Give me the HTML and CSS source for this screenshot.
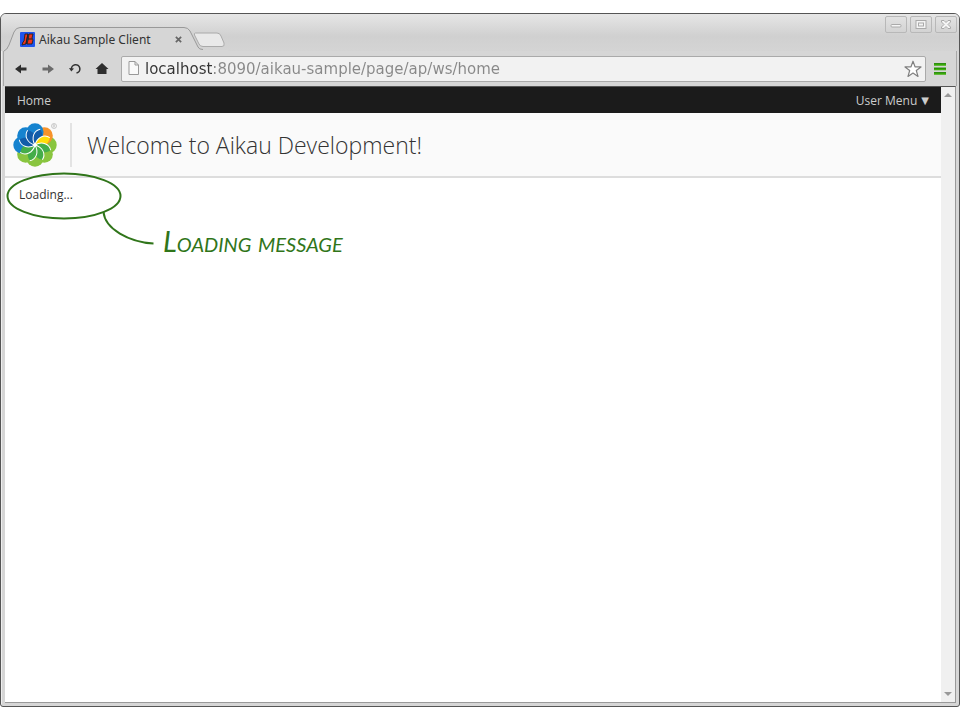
FILE: index.html
```
<!DOCTYPE html>
<html lang="en">
<head>
<meta charset="utf-8">
<title>Aikau Sample Client</title>
<link rel="stylesheet" href="styles.css">
</head>
<body>
<div class="window">
  <div class="titlebar">
    <div class="tabs">
      <svg class="tab-shape" viewBox="0 0 224 24" aria-hidden="true">
        <path class="tab-fill" d="M0 24 Q3 23 5 18 L10 5 Q12 1 16 1 H180 Q184 1 186 4 L194 20 Q195 23 199 23 H224 V24Z"/>
        <path class="tab-line" d="M0 24 Q3 23 5 18 L10 5 Q12 .5 16 .5 H180 Q184 .5 186 4 L194 20 Q195 22.500 199 22.500"/>
        <path class="new-tab" d="M191.500 6 H213 Q216 6 217 9 L220 16 Q221 19.500 218 19.500 H199 Q196 19.500 195 17 L190.500 8 Q190 6 191.500 6Z"/>
      </svg>
      <svg class="favicon" viewBox="0 0 15 15" aria-hidden="true">
        <rect width="15" height="15" rx="1" fill="#1f55ee"/>
        <path d="M5 2H8L6 12 2 13 3 10 4 9ZM9 2H13L12 6 13 8 12 12H7L8 8Z" fill="#f0341c" stroke="#222" stroke-width=".900"/>
        <path d="M8 7H12M8 2 6 12" stroke="#222" stroke-width="1.200"/>
      </svg>
      <span class="tab-title">Aikau Sample Client</span>
      <button class="tab-close" aria-label="Close tab"><svg viewBox="0 0 8 8"><path d="M1 1 7 7M7 1 1 7"/></svg></button>
    </div>
    <div class="controls">
      <button aria-label="Minimize"><svg viewBox="0 0 20 15"><rect x="5" y="7.500" width="10" height="2.500" rx="1"/></svg></button>
      <button aria-label="Maximize"><svg viewBox="0 0 20 15"><rect x="5" y="3.500" width="10" height="8"/><rect x="7.500" y="6" width="5" height="3"/></svg></button>
      <button aria-label="Close window"><svg viewBox="0 0 20 15"><path d="M5.500 3.500H8L10 5.500 12 3.500H14.500V5L12 7.500 14.500 10V11.500H12L10 9.500 8 11.500H5.500V10L8 7.500 5.500 5Z"/></svg></button>
    </div>
  </div>
  <div class="toolbar">
    <button class="tool" aria-label="Back"><svg viewBox="0 0 12 12"><path d="M0 6 6 1.500V4.500H11.500V7.500H6V10.500Z" fill="#2e2e2e"/></svg></button>
    <button class="tool" aria-label="Forward"><svg viewBox="0 0 12 12"><path d="M12 6 6 1.500V4.500H.500V7.500H6V10.500Z" fill="#6b6b6b"/></svg></button>
    <button class="tool" aria-label="Reload"><svg viewBox="0 0 12 12"><path d="M2.500 6.500A4.200 4.200 0 1 1 7.500 10" fill="none" stroke="#333" stroke-width="1.600"/><path d="M0 5 5 5.500 2.300 8.500Z" fill="#333"/></svg></button>
    <button class="tool" aria-label="Home page"><svg viewBox="0 0 12 12"><path d="M6 0 12.500 6H10.500V11H1.500V6H-.500Z" fill="#2e2e2e"/></svg></button>
    <div class="address">
      <svg class="page-icon" viewBox="0 0 12 15" aria-hidden="true"><path d="M1 .500H7L10.500 4V13.500H1ZM7 .500V4H10.500" fill="#fafafa" stroke="#999"/></svg>
      <input class="url" type="text" aria-label="Address" value="localhost:8090/aikau-sample/page/ap/ws/home" spellcheck="false">
      <button class="star" aria-label="Bookmark"><svg viewBox="0 0 18 18"><path d="M9 1.200 11 6.800 17 6.900 12.300 10.500 14 16.400 9 13 4 16.400 5.700 10.500 1 6.900 7 6.800Z" fill="#fff" stroke="#808080" stroke-width="1.200" stroke-linejoin="round"/></svg></button>
    </div>
    <button class="menu" aria-label="Browser menu"><svg viewBox="0 0 12 12"><path d="M0 1.500H12M0 6H12M0 10.500H12" stroke="#3fb00c" stroke-width="2.600"/><path d="M0 .700H12M0 5.200H12M0 9.700H12" stroke="#24830b"/></svg></button>
  </div>
  <div class="viewport">
    <div class="page">
      <nav class="navbar">
        <a href="#">Home</a>
        <button class="user-menu">User Menu <span class="caret">▼</span></button>
      </nav>
      <header class="header">
        <svg class="logo" viewBox="0 0 46 46" role="img" aria-label="Alfresco">
          <defs>
            <path id="petal" d="M23 23 C18 19 14.500 14.500 14.500 9.800 A8.500 8.500 0 0 1 31.500 9.800 C31.500 14.500 28 19 23 23Z"/>
            <path id="lens" d="M23 23 C16.500 18 16.500 10 22 6.500 C28.500 11 28 18 23 23Z"/>
            <path id="rib" d="M23 23 C16.500 18 16.500 10 22 6.500"/>
          </defs>
          <g>
            <use href="#petal" fill="#89c53f" transform="rotate(90 23 23)"/>
            <use href="#petal" fill="#89c53f" transform="rotate(135 23 23)"/>
            <use href="#petal" fill="#89c53f" transform="rotate(180 23 23)"/>
            <use href="#petal" fill="#89c53f" transform="rotate(225 23 23)"/>
            <use href="#petal" fill="#1683cf" transform="rotate(270 23 23)"/>
            <use href="#petal" fill="#1683cf" transform="rotate(315 23 23)"/>
            <use href="#petal" fill="#f7932a" transform="rotate(45 23 23)"/>
            <use href="#petal" fill="#1683cf"/>
          </g>
          <g>
            <use href="#lens" fill="#125ca9" transform="rotate(22 23 23)"/>
            <use href="#lens" fill="#ffdd08" transform="rotate(67 23 23)"/>
            <use href="#lens" fill="#45ad49" transform="rotate(112 23 23)"/>
            <use href="#lens" fill="#45ad49" transform="rotate(157 23 23)"/>
            <use href="#lens" fill="#45ad49" transform="rotate(202 23 23)"/>
            <use href="#lens" fill="#45ad49" transform="rotate(247 23 23)"/>
            <use href="#lens" fill="#125ca9" transform="rotate(292 23 23)"/>
            <use href="#lens" fill="#125ca9" transform="rotate(337 23 23)"/>
          </g>
          <g class="ribs">
            <use href="#rib" transform="rotate(22 23 23)"/>
            <use href="#rib" transform="rotate(67 23 23)"/>
            <use href="#rib" transform="rotate(112 23 23)"/>
            <use href="#rib" transform="rotate(157 23 23)"/>
            <use href="#rib" transform="rotate(202 23 23)"/>
            <use href="#rib" transform="rotate(247 23 23)"/>
            <use href="#rib" transform="rotate(292 23 23)"/>
            <use href="#rib" transform="rotate(337 23 23)"/>
          </g>
          <circle cx="23" cy="23" r="1.800" fill="#fff"/>
          <circle cx="42" cy="4" r="2.500" fill="none" stroke="#aaa" stroke-width=".600"/>
          <path d="M41.300 5.500V2.700H42.500Q43.300 3.500 42 4L43 5.500" fill="none" stroke="#aaa" stroke-width=".500"/>
        </svg>
        <h1>Welcome to Aikau Development!</h1>
      </header>
      <main class="content">
        <p>Loading...</p>
        <div class="callout">
          <svg viewBox="0 0 150 75" aria-hidden="true"><ellipse cx="59" cy="18" rx="56.500" ry="22.500"/><path d="M98.500 34C100 51 124 64 148.500 65.500"/></svg>
          <span>Loading message</span>
        </div>
      </main>
    </div>
    <div class="scrollbar" aria-hidden="true">
      <svg viewBox="0 0 8 4"><path d="M0 4 4 0 8 4Z"/></svg>
      <svg viewBox="0 0 8 4"><path d="M0 0 4 4 8 0Z"/></svg>
    </div>
  </div>
</div>
</body>
</html>
```
FILE: styles.css
```
* { box-sizing: border-box; }
body {
  margin: 0;
  padding: 13px 0;
  min-height: 100vh;
  display: flex;
  background: #fff;
  font-family: "Open Sans", sans-serif;
  color: #333;
}
button { padding: 0; border: 0; background: none; font: inherit; color: inherit; }
svg { display: block; overflow: visible; }
.window {
  flex: 1;
  display: flex;
  flex-direction: column;
  border: 1px solid #555;
  border-radius: 6px 6px 3px 3px;
  background: #d6d6d6;
  box-shadow: inset 1px 1px #eee;
}
.titlebar {
  display: flex;
  justify-content: space-between;
  height: 37px;
  border-radius: 5px 5px 0 0;
  background: linear-gradient(#e6e6e6, #d0d0d0 60%, #d4d4d4);
}
.tabs {
  position: relative;
  align-self: flex-end;
  display: flex;
  align-items: center;
  width: 224px;
  height: 24px;
  margin-left: 3px;
  padding-left: 16px;
  font-size: 12px;
}
.tab-shape { position: absolute; inset: 0; width: 224px; height: 24px; }
.tab-fill { fill: #d6d6d6; }
.tab-line { fill: none; stroke: #999; }
.new-tab { fill: #e9e9e9; stroke: #aaa; }
.favicon, .tab-title, .tab-close { position: relative; }
.favicon { width: 15px; height: 15px; }
.tab-title { width: 140px; padding-left: 4px; font-family: "Noto Sans", sans-serif; color: #333; }
.tab-close svg { width: 7px; height: 7px; fill: none; stroke: #666; stroke-width: 2; }
.controls { display: flex; gap: 3px; padding: 2px 2px 0 0; }
.controls button {
  height: 17px;
  border: 1px solid #b8b8b8;
  border-radius: 2px;
  background: linear-gradient(#e2e2e2, #d3d3d3);
}
.controls svg { width: 20px; height: 15px; fill: #f5f5f5; stroke: #aaa; }
.toolbar {
  display: flex;
  align-items: center;
  height: 35px;
  margin: 0 2px;
  padding-left: 11px;
  border: 1px solid #a8a8a8;
  border-width: 0 1px;
  background: #d6d6d6;
}
.tool { width: 12px; margin-right: 15px; }
.tool svg { width: 12px; height: 12px; }
.address {
  flex: 1;
  display: flex;
  align-items: center;
  min-width: 0;
  height: 26px;
  margin: 0 8px 0 -2px;
  padding: 0 3px 0 6px;
  border: 1px solid #aaa;
  border-radius: 2px;
  background: #f2f2f2;
}
.page-icon { width: 12px; height: 15px; }
.url {
  flex: 1;
  min-width: 0;
  height: 24px;
  margin-left: 5px;
  padding: 0;
  border: 0;
  outline: 0;
  font: 15px "DejaVu Sans", sans-serif;
  color: transparent;
  background: linear-gradient(to right, #333 67px, #888 67px) text;
  -webkit-background-clip: text;
}
.star svg { width: 18px; height: 18px; }
.menu { margin-right: 10px; }
.menu svg { width: 12px; height: 12px; }
.viewport {
  flex: 1;
  display: flex;
  margin: 0 3px 3px 4px;
  border: 1px solid #999;
  border-top-color: #555;
  border-width: 1px 1px 1px 0;
}
.page { flex: 1; display: flex; flex-direction: column; background: #fff; }
.navbar {
  display: flex;
  justify-content: space-between;
  align-items: center;
  height: 26px;
  padding: 0 12px;
  background: #1b1b1b;
  font-size: 12px;
  color: #ccc;
}
.navbar a { color: inherit; text-decoration: none; }
.user-menu { display: flex; align-items: center; gap: 4px; }
.caret { font: 10px "DejaVu Sans", sans-serif; }
.header {
  display: flex;
  align-items: center;
  height: 65px;
  padding-left: 7px;
  border-bottom: 2px solid #ddd;
  background: #fafafa;
}
.logo { width: 46px; height: 46px; }
.ribs { fill: none; stroke: #fff; stroke-width: 1; }
h1 {
  margin: 0 0 0 12px;
  padding-left: 15px;
  border-left: 2px solid #e3e3e3;
  font-size: 23px;
  font-weight: 300;
  line-height: 44px;
}
.content { position: relative; flex: 1; padding: 8px 14px; font-size: 12px; }
.content p { margin: 0; line-height: 18px; }
.callout { position: absolute; left: 0; top: 0; display: flex; align-items: flex-end; color: #30751a; }
.callout svg { width: 150px; height: 75px; fill: none; stroke: #30751a; stroke-width: 2; }
.callout span {
  margin-left: 8px;
  font: italic small-caps 29px/24px Lato, sans-serif;
  white-space: nowrap;
}
.scrollbar {
  display: flex;
  flex-direction: column;
  justify-content: space-between;
  align-items: center;
  width: 14px;
  padding: 6px 0;
  background: #f0f0f0;
}
.scrollbar svg { width: 8px; height: 4px; fill: #999; }
```
